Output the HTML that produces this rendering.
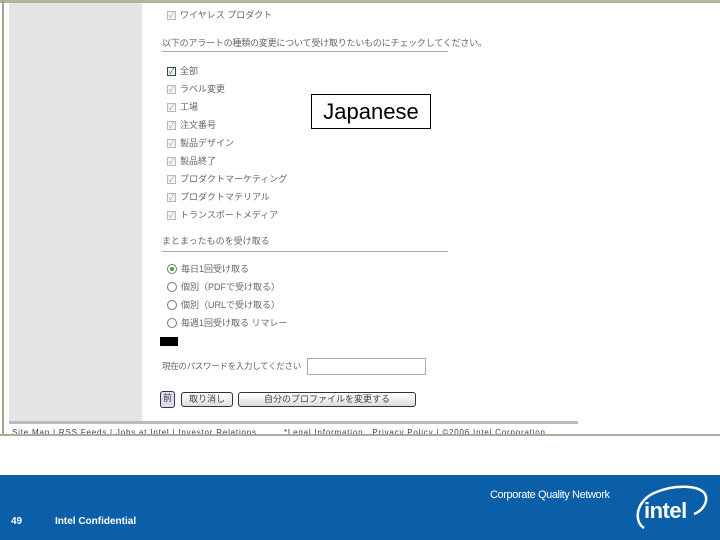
<!DOCTYPE html>
<html><head><meta charset="utf-8"><style>
*{margin:0;padding:0;box-sizing:border-box}
body{width:720px;height:540px;background:#fff;position:relative;overflow:hidden;font-family:"Liberation Sans","Noto Sans CJK JP",sans-serif;color:#555}
.abs{position:absolute}
.t{position:absolute;font-size:9px;color:#666;white-space:nowrap;line-height:11px}
.cb{position:absolute;width:9px;height:9px;border:1px solid #b8b8b8;background:#f4f4f4;font-size:8px;line-height:7px;color:#aaa;text-align:center}
.rb{position:absolute;width:10px;height:10px;border:1px solid #777;border-radius:50%;background:#fff}
.btn{position:absolute;border:1px solid #333;border-radius:3px;background:linear-gradient(#fff,#ddd);font-size:9px;color:#444;text-align:center;line-height:13px}
</style></head><body>
<div class="abs" style="left:0;top:0;width:720px;height:3px;background:#b7b19f"></div>
<div class="abs" style="left:2px;top:0;width:2px;height:435px;background:#a8a493"></div>
<div class="abs" style="left:9px;top:3px;width:133px;height:419px;background:#e4e4e4"></div>
<div class="abs" style="left:9px;top:421px;width:569px;height:3px;background:#bbb"></div>
<div class="abs" style="left:10px;top:424px;width:568px;height:10px;overflow:hidden"><div class="t" style="left:2px;top:3px;font-size:8px;color:#345;letter-spacing:0.8px">Site Map | RSS Feeds | Jobs at Intel | Investor Relations &nbsp;&nbsp;&nbsp;&nbsp;&nbsp;&nbsp;&nbsp; *Legal Information &nbsp; Privacy Policy | ©2006 Intel Corporation</div></div>
<div class="abs" style="left:0;top:434px;width:720px;height:2px;background:#b0ab9a"></div>

<div class="cb" style="left:167px;top:11px">✓</div><div class="t" style="left:180px;top:10px">ワイヤレス プロダクト</div>
<div class="t" style="left:162px;top:38px;letter-spacing:-0.2px">以下のアラートの種類の変更について受け取りたいものにチェックしてください。</div>
<div class="abs" style="left:162px;top:51px;width:286px;height:1px;background:#aaa"></div>
<div class="cb" style="left:167px;top:67px;border-color:#345;color:#284">✓</div><div class="t" style="left:180px;top:66px">全部</div>
<div class="cb" style="left:167px;top:85px">✓</div><div class="t" style="left:180px;top:84px">ラベル変更</div>
<div class="cb" style="left:167px;top:103px">✓</div><div class="t" style="left:180px;top:102px">工場</div>
<div class="cb" style="left:167px;top:121px">✓</div><div class="t" style="left:180px;top:120px">注文番号</div>
<div class="cb" style="left:167px;top:139px">✓</div><div class="t" style="left:180px;top:138px">製品デザイン</div>
<div class="cb" style="left:167px;top:157px">✓</div><div class="t" style="left:180px;top:156px">製品終了</div>
<div class="cb" style="left:167px;top:175px">✓</div><div class="t" style="left:180px;top:174px">プロダクトマーケティング</div>
<div class="cb" style="left:167px;top:193px">✓</div><div class="t" style="left:180px;top:192px">プロダクトマテリアル</div>
<div class="cb" style="left:167px;top:211px">✓</div><div class="t" style="left:180px;top:210px">トランスポートメディア</div>

<div class="abs" style="left:311px;top:94px;width:120px;height:35px;border:1px solid #000;background:#fff;font-size:22px;color:#000;text-align:center;line-height:33px">Japanese</div>

<div class="t" style="left:162px;top:236px">まとまったものを受け取る</div>
<div class="abs" style="left:162px;top:251px;width:286px;height:1px;background:#aaa"></div>
<div class="rb" style="left:167px;top:264px"><div class="abs" style="left:2px;top:2px;width:4px;height:4px;border-radius:50%;background:#3a3"></div></div><div class="t" style="left:181px;top:264px">毎日1回受け取る</div>
<div class="rb" style="left:167px;top:282px"></div><div class="t" style="left:181px;top:282px">個別（PDFで受け取る）</div>
<div class="rb" style="left:167px;top:300px"></div><div class="t" style="left:181px;top:300px">個別（URLで受け取る）</div>
<div class="rb" style="left:167px;top:318px"></div><div class="t" style="left:181px;top:318px">毎週1回受け取る リマレー</div>
<div class="abs" style="left:160px;top:337px;width:18px;height:9px;background:#000"></div>
<div class="t" style="left:162px;top:361px;font-size:8.5px;letter-spacing:-0.3px">現在のパスワードを入力してください</div>
<div class="abs" style="left:307px;top:358px;width:119px;height:17px;border:1px solid #aaa;background:#fff"></div>
<div class="btn" style="left:160px;top:391px;width:15px;height:17px;border-color:#335;background:#dde">前</div>
<div class="btn" style="left:181px;top:392px;width:52px;height:15px">取り消し</div>
<div class="btn" style="left:238px;top:392px;width:178px;height:15px">自分のプロファイルを変更する</div>

<div class="abs" style="left:0;top:475px;width:720px;height:65px;background:#0b5ea8"></div>
<div class="t" style="left:11px;top:516px;color:#fff;font-size:10px;font-weight:bold">49</div>
<div class="t" style="left:55px;top:516px;color:#fff;font-size:10px;font-weight:bold">Intel Confidential</div>
<div class="t" style="left:490px;top:490px;color:#fff;font-size:11px;letter-spacing:-0.4px">Corporate Quality Network</div>
<svg class="abs" style="left:632px;top:482px" width="80" height="50" viewBox="0 0 80 50">
<path d="M12 46 C2 40 3 20 22 11 C42 2 68 3 73 12 C77 20 70 29 62 32" fill="none" stroke="#fff" stroke-width="2.5"/>
<text x="12" y="36" fill="#fff" font-family="Liberation Sans" font-weight="bold" font-size="22" letter-spacing="-0.5">intel</text>
</svg>
</body></html>
